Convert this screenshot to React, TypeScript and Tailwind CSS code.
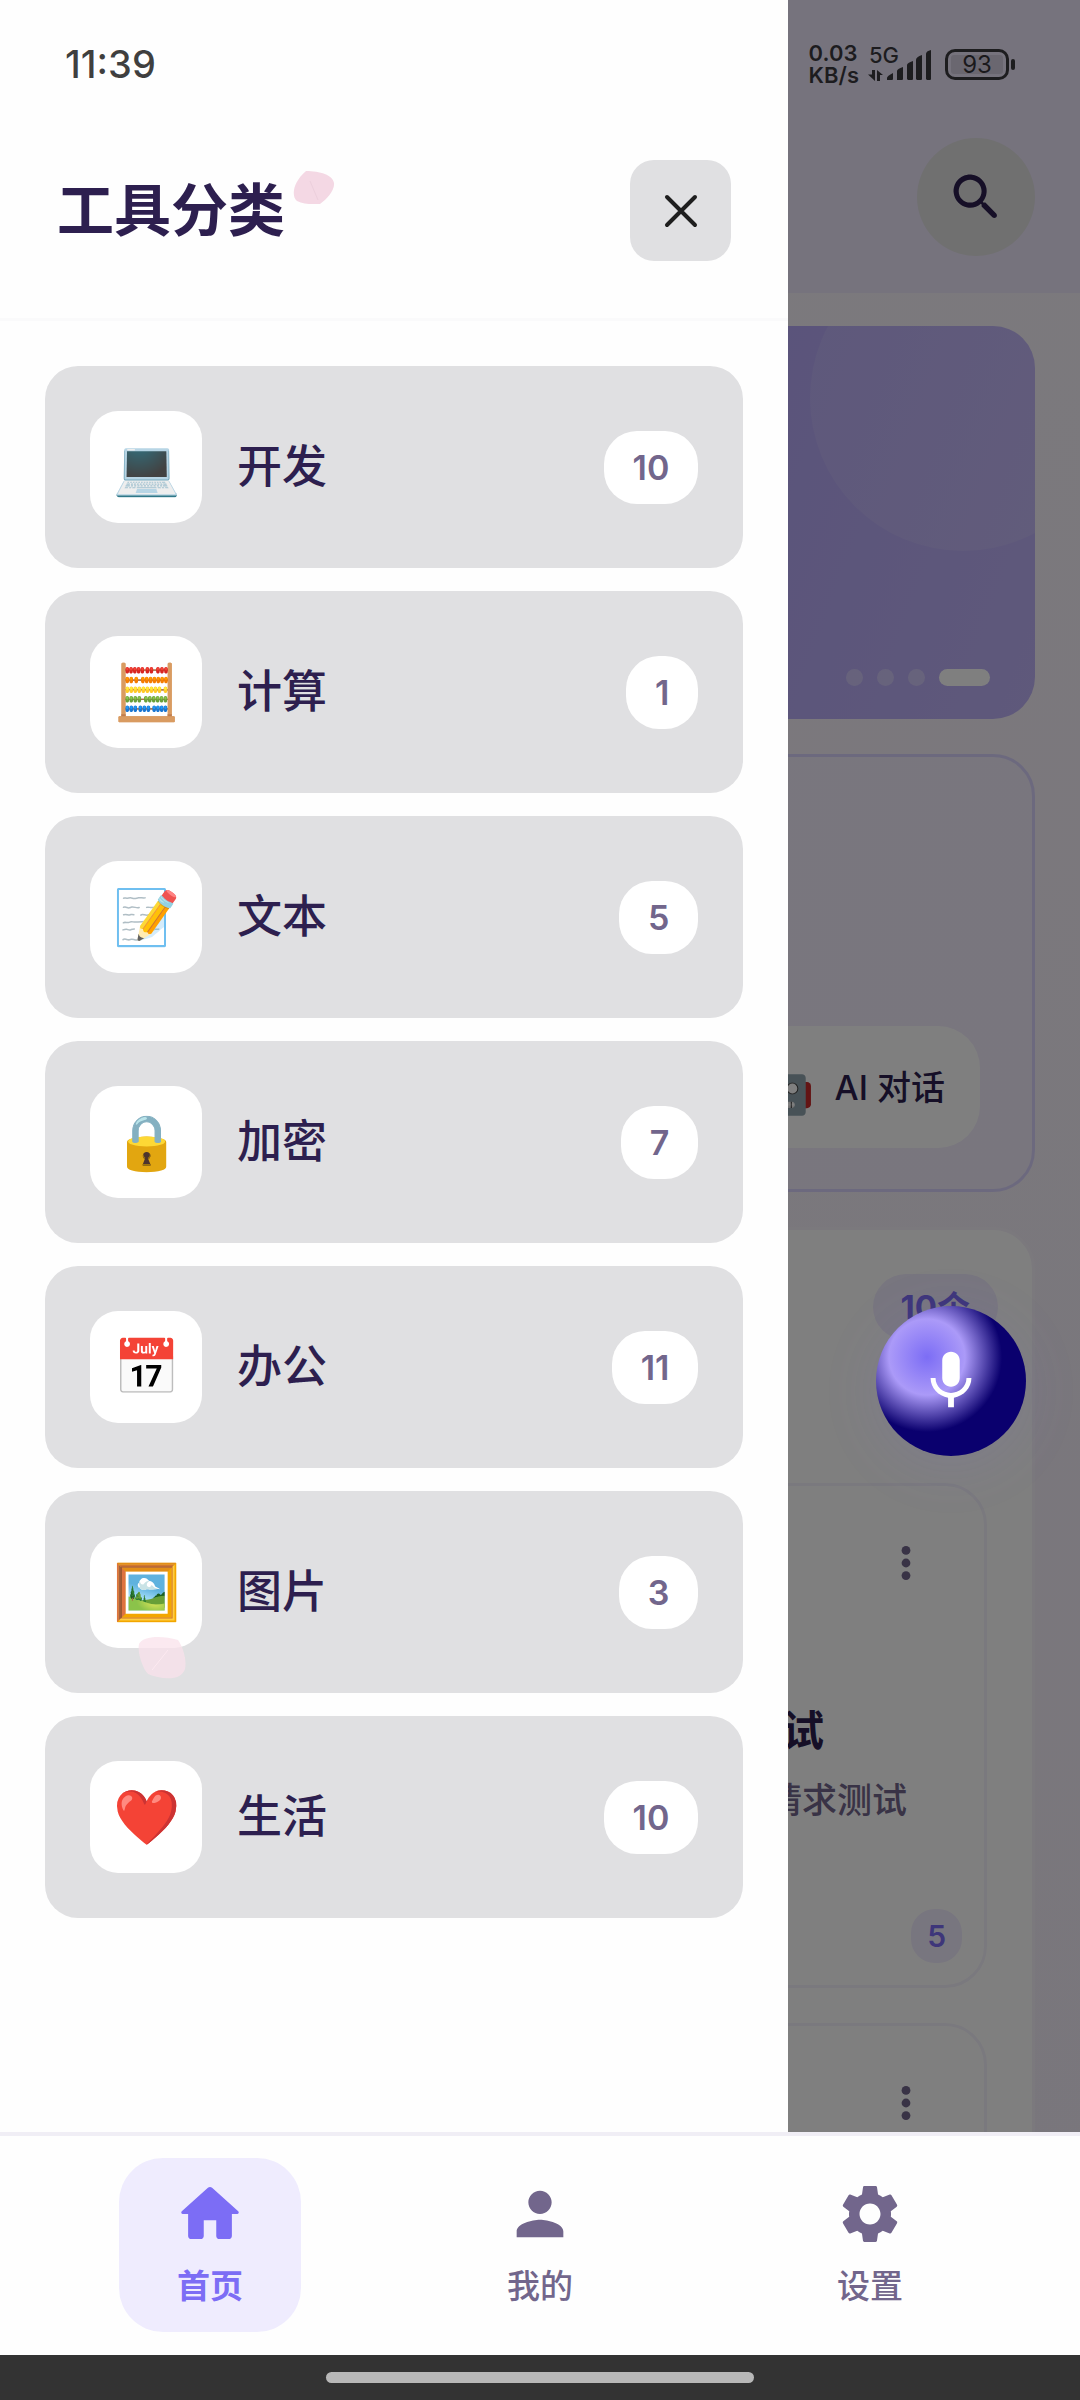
import type { ReactNode } from "react";
import { MdMic, MdPerson, MdSettings } from "react-icons/md";

const categories = [
  { emoji: "💻", name: "开发", count: 10 },
  { emoji: "🧮", name: "计算", count: 1 },
  { emoji: "📝", name: "文本", count: 5 },
  { emoji: "🔒", name: "加密", count: 7 },
  { emoji: "📅", name: "办公", count: 11 },
  { emoji: "🖼️", name: "图片", count: 3 },
  { emoji: "❤️", name: "生活", count: 10 },
];

function SearchIcon() {
  return (
    <svg viewBox="0 0 24 24" className="size-[61px] fill-current" aria-hidden="true">
      <path d="M15.5 14h-.79l-.28-.27c1.2-1.4 1.82-3.31 1.48-5.34-.47-2.78-2.79-5-5.59-5.34-4.23-.52-7.79 3.04-7.27 7.27.34 2.8 2.56 5.12 5.34 5.59 2.03.34 3.94-.28 5.34-1.48l.27.28v.79l4.25 4.25c.41.41 1.08.41 1.49 0 .41-.41.41-1.08 0-1.49L15.5 14zm-6 0C7.01 14 5 11.99 5 9.5S7.01 5 9.5 5 14 7.01 14 9.5 11.99 14 9.5 14z" />
    </svg>
  );
}

function HomeIcon() {
  return (
    <svg viewBox="0.8 0.8 22.4 22.4" className="size-[70px] fill-current" aria-hidden="true">
      <path d="M10 19v-5h4v5c0 .55.45 1 1 1h3c.55 0 1-.45 1-1v-7h1.7c.46 0 .68-.57.33-.87L12.67 3.6c-.38-.34-.96-.34-1.34 0l-8.36 7.53c-.34.3-.13.87.33.87H5v7c0 .55.45 1 1 1h3c.55 0 1-.45 1-1z" />
    </svg>
  );
}

function StatusBar() {
  return (
    <div className="pointer-events-none absolute inset-x-0 top-0 z-30 flex h-32 items-center justify-between px-[65px] text-black/75">
      <span className="text-[38px] leading-10 font-medium">11:39</span>
      <div className="flex items-center gap-[14px]">
        <div className="flex items-center gap-2">
          <div className="text-[22px] leading-[22px] font-semibold">
            <div>0.03</div>
            <div>KB/s</div>
          </div>
          <div className="relative h-9 w-[64px]">
            <span className="absolute -top-[2px] left-[2px] text-[22px] leading-[22px] font-medium">5G</span>
            <svg viewBox="0 0 64 36" className="h-9 w-[64px] fill-current" aria-hidden="true">
              <path d="M5 24h3v11L1 28.500h4zM10 35h3v-6h3l-6-5z" />
              <path d="M20 34v-2q0-2 6-5v6q0 1-1 1zM30 34v-9q0-2 6-4v12q0 1-1 1h-4zM40 33V19q0-2 6-4v18q0 1-1 1h-4zM49 33V14q0-3 6-5v24q0 1-1 1h-4zM59 33V8q0-3 5-4v29q0 1-1 1h-3z" />
            </svg>
          </div>
        </div>
        <div className="flex items-center gap-[2px]">
          <div className="flex h-[31px] w-[64px] items-center justify-center rounded-[10px] border-[3px] border-current p-[3px]">
            <div className="h-full w-full rounded-[3px] bg-black/10 text-center text-[24px] leading-5">93</div>
          </div>
          <div className="h-[11px] w-1 rounded-full bg-current" />
        </div>
      </div>
    </div>
  );
}

function MoreIcon() {
  return (
    <svg viewBox="0 0 12 36" className="h-9 w-3 fill-current" aria-hidden="true">
      <circle cx="6" cy="5.400" r="4.400" />
      <circle cx="6" cy="18" r="4.400" />
      <circle cx="6" cy="30.600" r="4.400" />
    </svg>
  );
}

function ToolCard({ title, text, count }: { title: string; text: string; count: number }) {
  return (
    <article className="col-start-2 flex min-h-[505px] flex-col rounded-[42px] border-[3px] border-[#f5f3fc] bg-white">
      <div className="flex justify-end pt-[59px] pr-[72px] text-[#72668c]">
        <button type="button" aria-label="更多">
          <MoreIcon />
        </button>
      </div>
      <h3 className="pt-[120px] pr-[160px] text-right text-[42px] leading-[60px] font-bold text-[#2d1f4f]">{title}</h3>
      <p className="pt-[14px] pr-[77px] text-right text-[35px] leading-[50px] font-medium text-[#72668c]">{text}</p>
      <div className="mt-auto flex justify-end pr-[22px] pb-[22px]">
        <span className="rounded-[24px] bg-[#f1ecfe] px-4 py-[7px] text-[30px] leading-10 font-semibold text-[#7c6df5]">{count}</span>
      </div>
    </article>
  );
}

function HomePage() {
  return (
    <div className="bg-linear-to-b from-[#f8f3fa] to-[#f2ecf9]">
      <header className="flex justify-end bg-[#ede6fb] pt-[138px] pr-[45px] pb-[37px]">
        <button type="button" aria-label="搜索" className="flex size-[118px] items-center justify-center rounded-full bg-[#e0e0e1] text-[#2d1f4f]">
          <SearchIcon />
        </button>
      </header>
      <div className="flex flex-col gap-[35px] px-[45px] py-[33px]">
        <section className="relative flex h-[393px] items-end justify-end overflow-hidden rounded-[42px] bg-[linear-gradient(110deg,#a596f8,#beb2f6)] px-[45px] py-[33px]">
          <div className="absolute -top-[81px] -right-[81px] size-[306px] rounded-full bg-white/10" />
          <div className="relative flex gap-[14px]">
            <span className="size-[17px] rounded-full bg-white/30" />
            <span className="size-[17px] rounded-full bg-white/30" />
            <span className="size-[17px] rounded-full bg-white/30" />
            <span className="h-[17px] w-[51px] rounded-full bg-white" />
          </div>
        </section>
        <section className="flex justify-end rounded-[42px] border-[3px] border-[#d9d3fd] bg-[linear-gradient(110deg,#f0eefb,#f3edfd)] px-[52px] pt-[269px] pb-[41px]">
          <button type="button" className="flex h-[122px] items-center gap-[20px] rounded-[42px] bg-white px-[35px] text-[34px] font-medium text-[#2d1f4f]">
            <span className="text-[52px] leading-none">🤖</span>
            AI 对话
          </button>
        </section>
        <section className="rounded-[42px] border-[3px] border-[#f7f2fb] bg-white">
          <div className="flex justify-end px-[34px] pt-11 pb-[143px]">
            <span className="rounded-[33px] bg-[#f1ecfe] px-7 py-[9px] text-[33px] leading-[48px] font-bold text-[#7c6df5]">10个</span>
          </div>
          <div className="grid grid-cols-2 gap-[35px] px-[45px] pb-[45px]">
            <ToolCard title="测试" text="请求测试" count={5} />
            <ToolCard title="测试" text="请求测试" count={5} />
          </div>
        </section>
      </div>
    </div>
  );
}

function Drawer() {
  return (
    <aside className="absolute inset-y-0 left-0 flex w-[73%] flex-col bg-[#fefefe]">
      <div className="relative flex items-center justify-between border-b-[3px] border-[#fafafb] px-[57px] pt-[160px] pb-[57px]">
        <h1 className="text-[57px] leading-[80px] font-bold text-[#2d1f4f]">工具分类</h1>
        <button type="button" aria-label="关闭" className="flex size-[101px] items-center justify-center rounded-[24px] bg-[#e0e0e2]">
          <svg viewBox="0 0 36 36" className="size-9" fill="none" stroke="#1e1e1e" strokeWidth="4" strokeLinecap="round" aria-hidden="true">
            <path d="M4 4l28 28M32 4L4 32" />
          </svg>
        </button>
        <svg viewBox="0 0 44 36" className="absolute top-[170px] left-[292px] h-9 w-11" aria-hidden="true">
          <path d="M14 1C28 1 41 5 42 13C43 20 35 29 28 34C22 34 12 35 5 31C-1 26 1 12 14 1Z" fill="#f4d8e4" />
          <path d="M18 11L26 30" stroke="#eccfdc" strokeWidth="1" />
        </svg>
      </div>
      <ul className="flex flex-col gap-[23px] px-[45px] py-[45px]">
        {categories.map((c) => (
          <li key={c.name}>
            <button type="button" className="flex w-full items-center gap-[35px] rounded-[33px] bg-[#e0e0e2] p-[45px]">
              <span className="flex size-[112px] items-center justify-center rounded-[28px] bg-white text-[54px] leading-none">{c.emoji}</span>
              <span className="flex-1 text-left text-[45px] leading-[64px] font-medium text-[#2d1f4f]">{c.name}</span>
              <span className="rounded-[33px] bg-white px-[29px] py-[14px] text-[34px] leading-[45px] font-semibold text-[#72668c]">{c.count}</span>
            </button>
          </li>
        ))}
      </ul>
      <svg viewBox="0 0 48 44" className="pointer-events-none absolute top-[1636px] left-[138px] h-11 w-12" aria-hidden="true">
        <path d="M1 8C4 0 24 -1 40 4C45 11 49 24 47 33C43 46 22 43 10 38C5 33 -1 17 1 8Z" fill="#f9e2eb" fillOpacity="0.75" />
        <path d="M30 14L14 34" stroke="#fdeaf1" strokeWidth="1" />
      </svg>
    </aside>
  );
}

function NavItem({ icon, label, active }: { icon: ReactNode; label: string; active?: boolean }) {
  return (
    <a
      href="#"
      aria-current={active ? "page" : undefined}
      className={
        active
          ? "flex w-[182px] flex-col items-center gap-[15px] rounded-[44px] bg-[#efecfe] pt-[21px] pb-6 font-bold text-[#7c6df5]"
          : "flex w-[182px] flex-col items-center gap-[15px] rounded-[44px] pt-[21px] pb-6 font-medium text-[#72668c]"
      }
    >
      {icon}
      <span className="text-[33px] leading-[44px]">{label}</span>
    </a>
  );
}

export default function App() {
  return (
    <div className="flex h-screen flex-col overflow-hidden bg-[#fefefe] font-['Inter','Noto_Sans_CJK_SC',sans-serif]">
      <div className="relative min-h-0 flex-1 overflow-hidden">
        <HomePage />
        <div className="absolute inset-0 bg-black/50" />
        <Drawer />
        <StatusBar />
        <button
          type="button"
          aria-label="语音"
          className="absolute top-[1306px] right-[54px] z-20 flex size-[150px] items-center justify-center rounded-full bg-[radial-gradient(circle_at_34%_34%,#7c6df5_0px,#ab9af8_38px,#0a006e_75px)] text-white shadow-[0_10px_60px_rgba(124,109,245,0.1)]"
        >
          <MdMic className="size-[70px]" />
        </button>
      </div>
      <nav className="flex justify-around border-t-4 border-[#f0eef5] px-[45px] pt-[22px] pb-[23px]">
        <div className="flex flex-1 justify-center">
          <NavItem active icon={<HomeIcon />} label="首页" />
        </div>
        <div className="flex flex-1 justify-center">
          <NavItem icon={<MdPerson className="size-[70px]" />} label="我的" />
        </div>
        <div className="flex flex-1 justify-center">
          <NavItem icon={<MdSettings className="size-[70px]" />} label="设置" />
        </div>
      </nav>
      <div className="flex h-[45px] items-center justify-center bg-[#333333]">
        <div className="h-[11px] w-[428px] rounded-full bg-[#b8b8b8]" />
      </div>
    </div>
  );
}
